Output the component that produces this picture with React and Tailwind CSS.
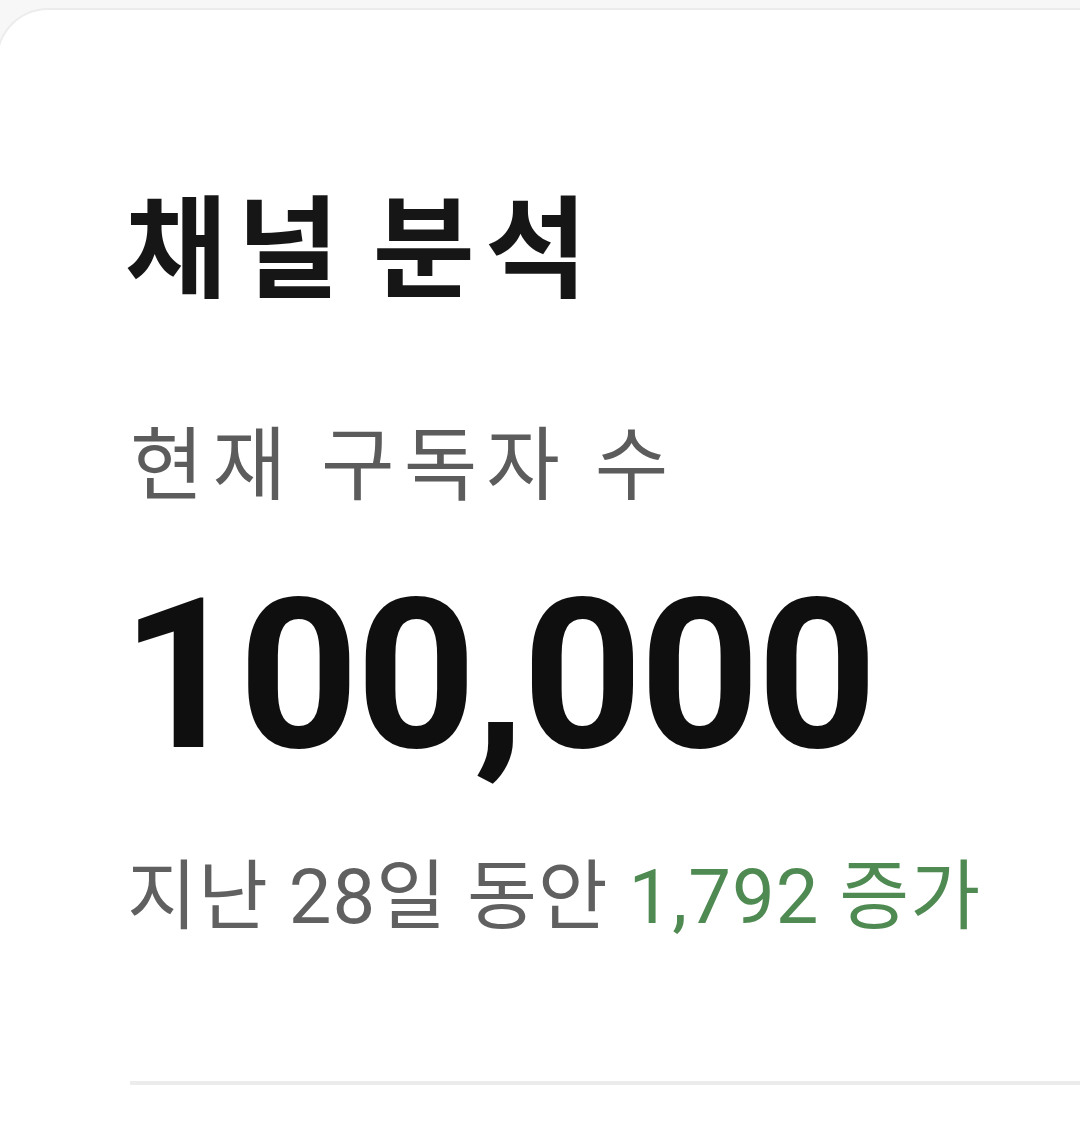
export default function App() {
  return (
    <div
      className="w-[1080px] h-[1127px] overflow-hidden bg-[#f7f7f7] pt-2"
      style={{ fontFamily: 'Roboto, "Noto Sans CJK KR", sans-serif' }}
    >
      <div className="ml-[-4px] h-full rounded-tl-[52px] border-t-2 border-l-2 border-[#ececec] bg-white pl-[132px] pt-[186px]">
        <h2 className="ml-[-5px] text-[111px] font-bold leading-none tracking-[10px] [word-spacing:-14px] text-[#161616]">
          채널 분석
        </h2>

        <p className="mt-[119px] text-[80px] leading-none tracking-[9px] [word-spacing:-3px] text-[#5c5c5c]">
          현재 구독자 수
        </p>

        <p className="ml-[-9px] mt-[64px] text-[210px] font-bold leading-none tracking-[-3px] text-[#0f0f0f]">
          100,000
        </p>

        <p className="ml-[-3px] mt-[79px] text-[76px] leading-none tracking-[1px] text-[#606060]">
          지난 28일 동안 <span className="text-[#4f8a52]">1,792 증가</span>
        </p>

        <div className="mt-[146px] h-[4px] bg-[#ececec]" />
      </div>
    </div>
  );
}
